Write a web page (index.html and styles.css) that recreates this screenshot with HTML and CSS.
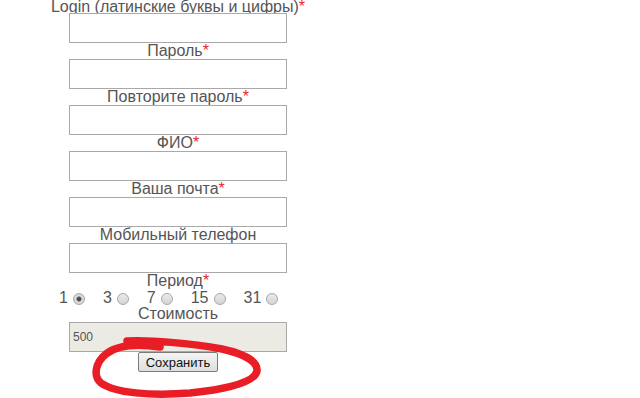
FILE: index.html
```html
<!DOCTYPE html>
<html lang="ru">
<head>
  <meta charset="UTF-8" />
  <meta name="viewport" content="width=device-width, initial-scale=1" />
  <title>Регистрация</title>
  <link rel="stylesheet" href="styles.css">
</head>
<body>

<form class="reg-form">
  <div class="field-label first">Login (латинские буквы и цифры)<span class="req">*</span></div>
  <input class="field-input" type="text">

  <div class="field-label">Пароль<span class="req">*</span></div>
  <input class="field-input" type="password">

  <div class="field-label">Повторите пароль<span class="req">*</span></div>
  <input class="field-input" type="password">

  <div class="field-label">ФИО<span class="req">*</span></div>
  <input class="field-input" type="text">

  <div class="field-label">Ваша почта<span class="req">*</span></div>
  <input class="field-input" type="text">

  <div class="field-label">Мобильный телефон</div>
  <input class="field-input" type="text">

  <div class="field-label">Период<span class="req">*</span></div>
  <div class="period">
    <label class="period-item">1<input type="radio" name="period" value="1" checked></label>
    <label class="period-item">3<input type="radio" name="period" value="3"></label>
    <label class="period-item">7<input type="radio" name="period" value="7"></label>
    <label class="period-item">15<input type="radio" name="period" value="15"></label>
    <label class="period-item">31<input type="radio" name="period" value="31"></label>
  </div>

  <div class="field-label">Стоимость</div>
  <input class="field-input price" type="text" value="500" readonly>

  <button class="save-btn" type="button">Сохранить</button>
</form>

<!-- обводка от руки вокруг кнопки -->
<svg class="scribble" width="640" height="398" viewBox="0 0 640 398">
  <path d="M127 341 C150 340 190 343 222 349 C245 354 258 362 257 371 C255 382 230 389 190 393 C150 396 115 393 101 383 C93 376 95 363 106 354 C116 346 132 343 160 347"
        fill="none" stroke="#e81d25" stroke-width="7.5" stroke-linecap="round" stroke-linejoin="round"/>
</svg>

</body>
</html>
```

FILE: styles.css
```css
body {
  margin: 0 8px 8px;
  font-family: "Liberation Sans", Arial, sans-serif;
  background: #fff;
}
.reg-form {
  width: 340px;
  display: flex;
  flex-direction: column;
  align-items: center;
}
.field-label {
  font-size: 16px;
  line-height: 16px;
  color: #555;
  text-align: center;
  white-space: nowrap;
}
.field-label.first {
  line-height: 13px;
}
.req {
  color: #e8262d;
}
.field-input {
  box-sizing: border-box;
  width: 218px;
  height: 30px;
  margin: 0;
  border: 1px solid #a9a9a9;
  background: #fff;
  padding: 0 3px;
  font-family: "Liberation Sans", Arial, sans-serif;
  font-size: 12px;
  color: #545454;
}
.field-input.price {
  background: #ebebe4;
}
.period {
  align-self: flex-start;
  display: flex;
  align-items: center;
  height: 17px;
  margin-left: 51px;
  font-size: 16px;
  color: #555;
}
.period-item {
  display: flex;
  align-items: center;
  margin-right: 18px;
}
.period-item input {
  appearance: none;
  -webkit-appearance: none;
  width: 12px;
  height: 12px;
  margin: 2px 0 0 5px;
  border: 1px solid #a8a8a8;
  border-radius: 50%;
  background: linear-gradient(#eaeaea, #d4d4d4);
  box-sizing: border-box;
}
.period-item input:checked {
  background: radial-gradient(circle, #444 0, #555 2px, #dcdcdc 3px, #d0d0d0 6px);
}
.save-btn {
  height: 20px;
  width: 80px;
  padding: 0;
  margin: 0;
  font-family: "Liberation Sans", Arial, sans-serif;
  font-size: 13px;
  color: #111;
  border: 1px solid #7a7a7a;
  border-radius: 2px;
  background: linear-gradient(#f4f4f4, #dedede);
}
.scribble {
  position: absolute;
  left: 0;
  top: 0;
  pointer-events: none;
}
```
